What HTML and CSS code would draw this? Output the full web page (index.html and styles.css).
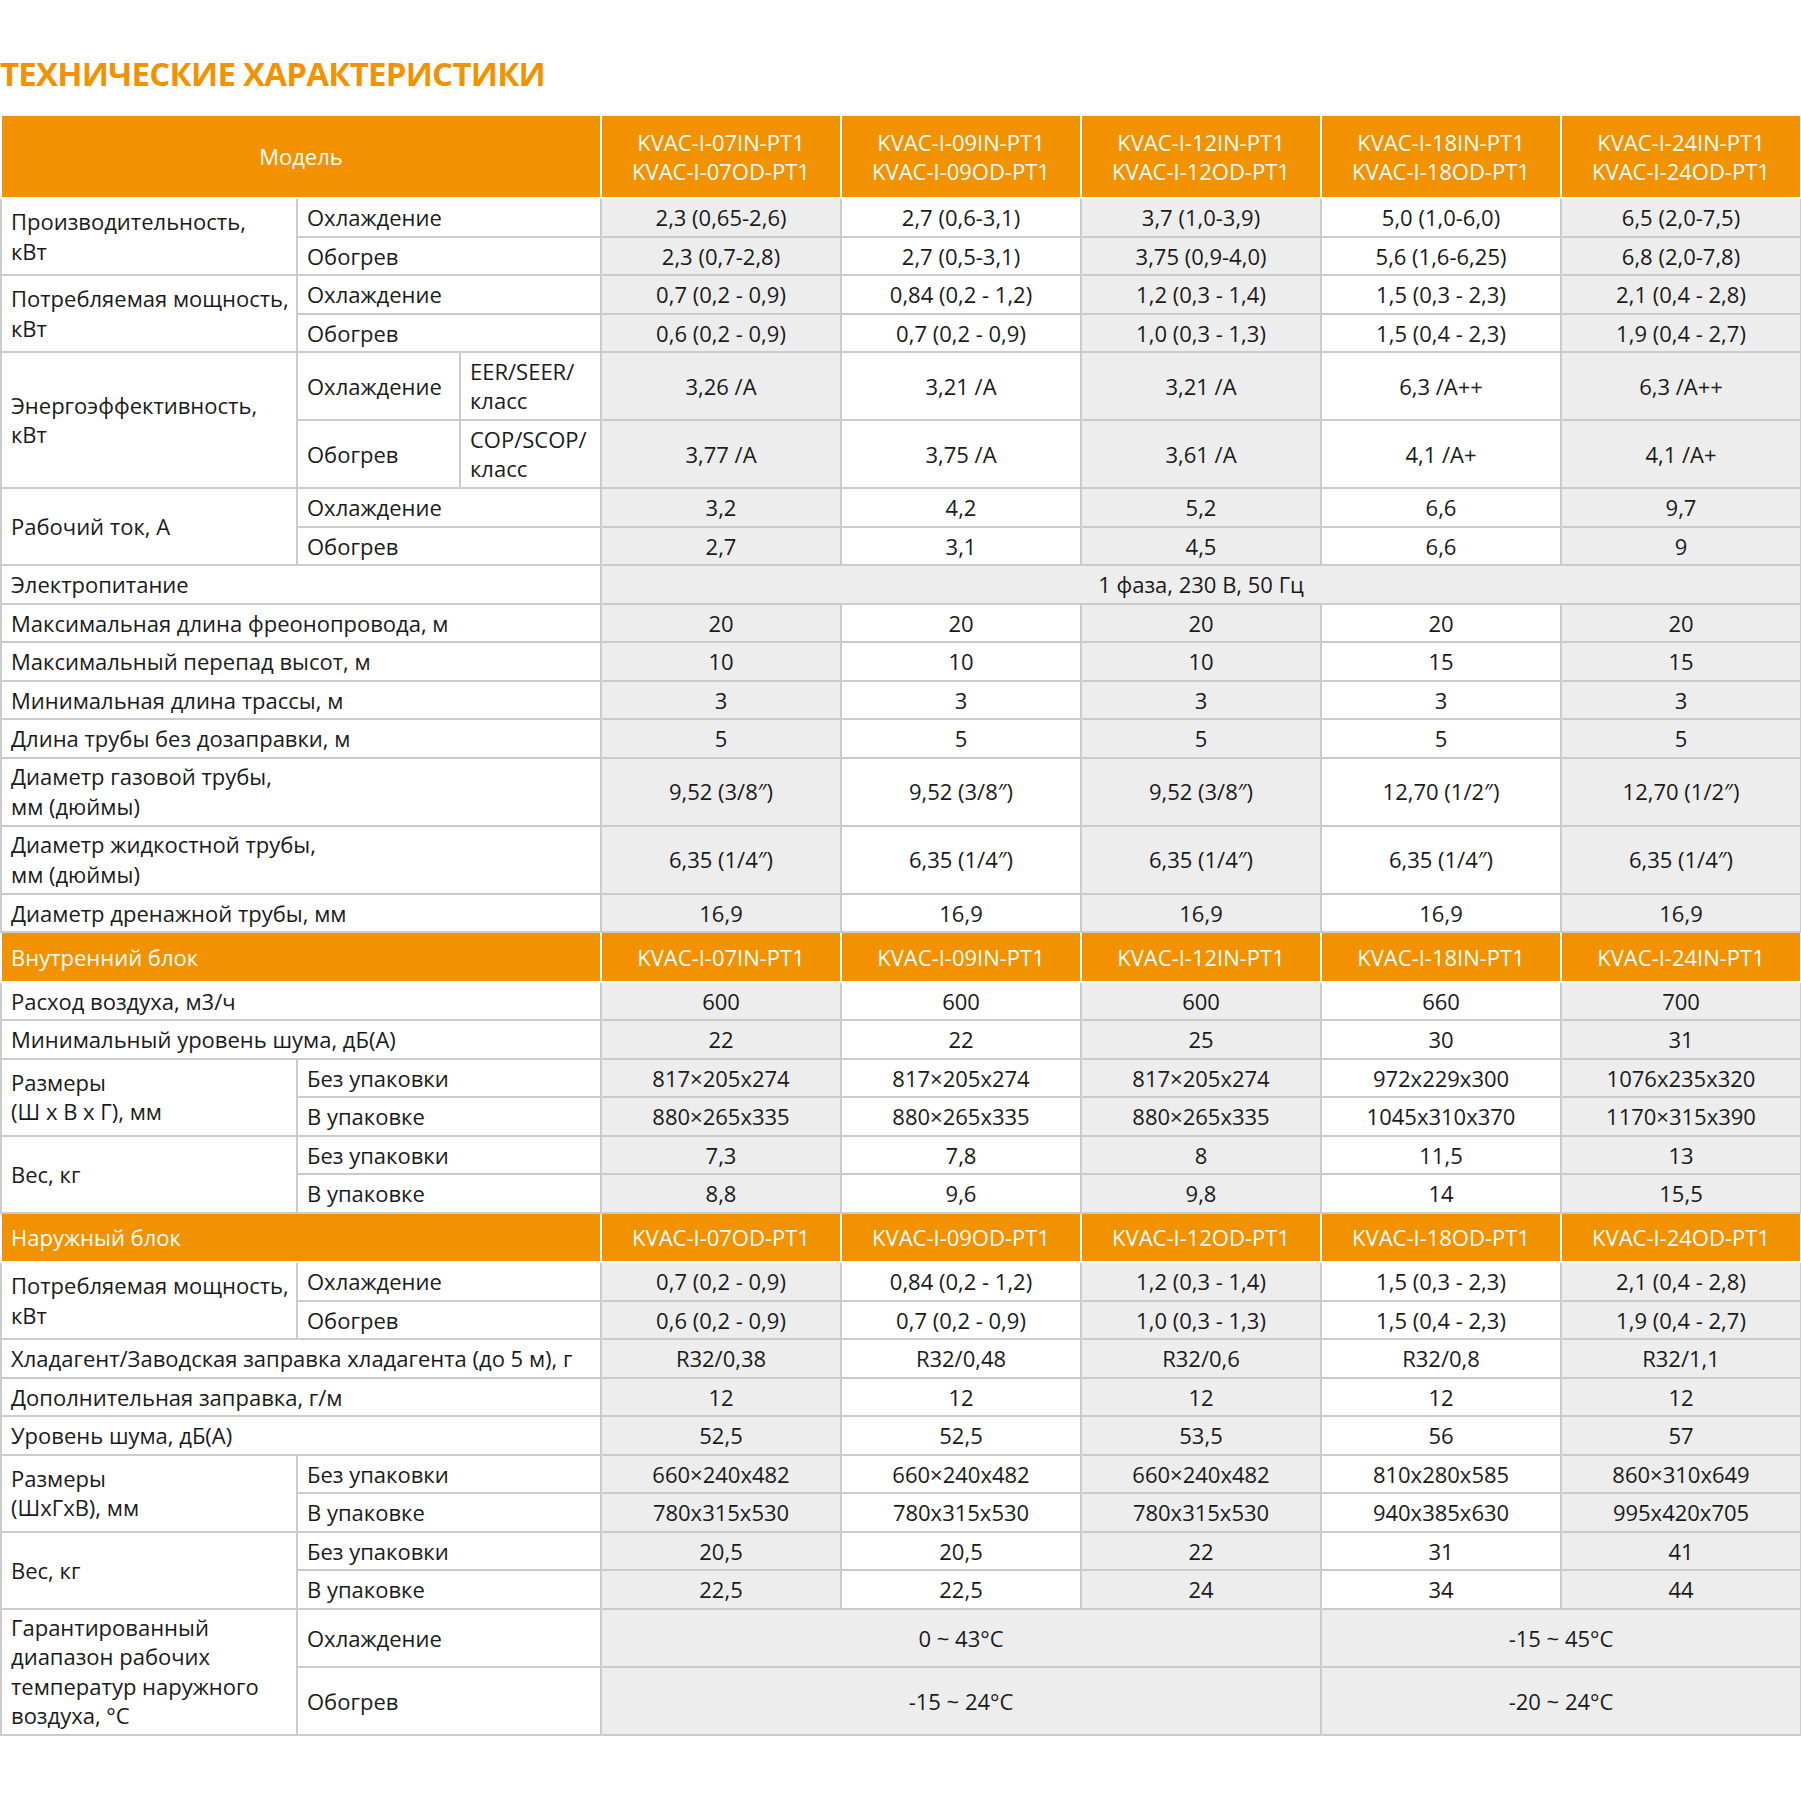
FILE: index.html
```html
<!DOCTYPE html>
<html lang="ru">
<head>
    <meta charset="UTF-8">
    <meta name="viewport" content="width=device-width, initial-scale=1.0">
    <title>Технические характеристики</title>
    <link rel="stylesheet" href="styles.css">
</head>
<body>
    <h1 class="title">ТЕХНИЧЕСКИЕ ХАРАКТЕРИСТИКИ</h1>

    <table class="specs">
        <colgroup>
            <col class="c-label">
            <col class="c-sub">
            <col class="c-kind">
            <col class="c-val"><col class="c-val"><col class="c-val"><col class="c-val"><col class="c-val">
        </colgroup>

        <tr class="head model">
            <td colspan="3" class="center">Модель</td>
            <td class="v">KVAC-I-07IN-PT1<br>KVAC-I-07OD-PT1</td>
            <td class="v">KVAC-I-09IN-PT1<br>KVAC-I-09OD-PT1</td>
            <td class="v">KVAC-I-12IN-PT1<br>KVAC-I-12OD-PT1</td>
            <td class="v">KVAC-I-18IN-PT1<br>KVAC-I-18OD-PT1</td>
            <td class="v">KVAC-I-24IN-PT1<br>KVAC-I-24OD-PT1</td>
        </tr>

        <tr>
            <td rowspan="2" class="ml">Производительность,<br>кВт</td>
            <td colspan="2">Охлаждение</td>
            <td class="v">2,3 (0,65-2,6)</td><td class="v">2,7 (0,6-3,1)</td><td class="v">3,7 (1,0-3,9)</td><td class="v">5,0 (1,0-6,0)</td><td class="v">6,5 (2,0-7,5)</td>
        </tr>
        <tr>
            <td colspan="2">Обогрев</td>
            <td class="v">2,3 (0,7-2,8)</td><td class="v">2,7 (0,5-3,1)</td><td class="v">3,75 (0,9-4,0)</td><td class="v">5,6 (1,6-6,25)</td><td class="v">6,8 (2,0-7,8)</td>
        </tr>

        <tr>
            <td rowspan="2" class="ml">Потребляемая мощность,<br>кВт</td>
            <td colspan="2">Охлаждение</td>
            <td class="v">0,7 (0,2 - 0,9)</td><td class="v">0,84 (0,2 - 1,2)</td><td class="v">1,2 (0,3 - 1,4)</td><td class="v">1,5 (0,3 - 2,3)</td><td class="v">2,1 (0,4 - 2,8)</td>
        </tr>
        <tr>
            <td colspan="2">Обогрев</td>
            <td class="v">0,6 (0,2 - 0,9)</td><td class="v">0,7 (0,2 - 0,9)</td><td class="v">1,0 (0,3 - 1,3)</td><td class="v">1,5 (0,4 - 2,3)</td><td class="v">1,9 (0,4 - 2,7)</td>
        </tr>

        <tr class="tall">
            <td rowspan="2" class="ml">Энергоэффективность,<br>кВт</td>
            <td>Охлаждение</td>
            <td class="ml">EER/SEER/<br>класс</td>
            <td class="v">3,26 /A</td><td class="v">3,21 /A</td><td class="v">3,21 /A</td><td class="v">6,3 /A++</td><td class="v">6,3 /A++</td>
        </tr>
        <tr class="tall">
            <td>Обогрев</td>
            <td class="ml">COP/SCOP/<br>класс</td>
            <td class="v">3,77 /A</td><td class="v">3,75 /A</td><td class="v">3,61 /A</td><td class="v">4,1 /A+</td><td class="v">4,1 /A+</td>
        </tr>

        <tr>
            <td rowspan="2">Рабочий ток, А</td>
            <td colspan="2">Охлаждение</td>
            <td class="v">3,2</td><td class="v">4,2</td><td class="v">5,2</td><td class="v">6,6</td><td class="v">9,7</td>
        </tr>
        <tr>
            <td colspan="2">Обогрев</td>
            <td class="v">2,7</td><td class="v">3,1</td><td class="v">4,5</td><td class="v">6,6</td><td class="v">9</td>
        </tr>

        <tr>
            <td colspan="3">Электропитание</td>
            <td colspan="5" class="v grey">1 фаза, 230 В, 50 Гц</td>
        </tr>
        <tr>
            <td colspan="3">Максимальная длина фреонопровода, м</td>
            <td class="v">20</td><td class="v">20</td><td class="v">20</td><td class="v">20</td><td class="v">20</td>
        </tr>
        <tr>
            <td colspan="3">Максимальный перепад высот, м</td>
            <td class="v">10</td><td class="v">10</td><td class="v">10</td><td class="v">15</td><td class="v">15</td>
        </tr>
        <tr>
            <td colspan="3">Минимальная длина трассы, м</td>
            <td class="v">3</td><td class="v">3</td><td class="v">3</td><td class="v">3</td><td class="v">3</td>
        </tr>
        <tr>
            <td colspan="3">Длина трубы без дозаправки, м</td>
            <td class="v">5</td><td class="v">5</td><td class="v">5</td><td class="v">5</td><td class="v">5</td>
        </tr>
        <tr class="two">
            <td colspan="3" class="ml">Диаметр газовой трубы,<br>мм (дюймы)</td>
            <td class="v">9,52 (3/8″)</td><td class="v">9,52 (3/8″)</td><td class="v">9,52 (3/8″)</td><td class="v">12,70 (1/2″)</td><td class="v white">12,70 (1/2″)</td>
        </tr>
        <tr class="two">
            <td colspan="3" class="ml">Диаметр жидкостной трубы,<br>мм (дюймы)</td>
            <td class="v">6,35 (1/4″)</td><td class="v">6,35 (1/4″)</td><td class="v">6,35 (1/4″)</td><td class="v">6,35 (1/4″)</td><td class="v white">6,35 (1/4″)</td>
        </tr>
        <tr>
            <td colspan="3">Диаметр дренажной трубы, мм</td>
            <td class="v">16,9</td><td class="v">16,9</td><td class="v">16,9</td><td class="v">16,9</td><td class="v">16,9</td>
        </tr>

        <tr class="head">
            <td colspan="3">Внутренний блок</td>
            <td class="v">KVAC-I-07IN-PT1</td><td class="v">KVAC-I-09IN-PT1</td><td class="v">KVAC-I-12IN-PT1</td><td class="v">KVAC-I-18IN-PT1</td><td class="v">KVAC-I-24IN-PT1</td>
        </tr>
        <tr>
            <td colspan="3">Расход воздуха, м3/ч</td>
            <td class="v">600</td><td class="v">600</td><td class="v">600</td><td class="v">660</td><td class="v">700</td>
        </tr>
        <tr>
            <td colspan="3">Минимальный уровень шума, дБ(А)</td>
            <td class="v">22</td><td class="v">22</td><td class="v">25</td><td class="v">30</td><td class="v">31</td>
        </tr>
        <tr>
            <td rowspan="2" class="ml">Размеры<br>(Ш x В x Г), мм</td>
            <td colspan="2">Без упаковки</td>
            <td class="v">817×205x274</td><td class="v">817×205x274</td><td class="v">817×205x274</td><td class="v">972x229x300</td><td class="v">1076x235x320</td>
        </tr>
        <tr>
            <td colspan="2">В упаковке</td>
            <td class="v">880×265x335</td><td class="v">880×265x335</td><td class="v">880×265x335</td><td class="v">1045x310x370</td><td class="v">1170×315x390</td>
        </tr>
        <tr>
            <td rowspan="2">Вес, кг</td>
            <td colspan="2">Без упаковки</td>
            <td class="v">7,3</td><td class="v">7,8</td><td class="v">8</td><td class="v">11,5</td><td class="v">13</td>
        </tr>
        <tr>
            <td colspan="2">В упаковке</td>
            <td class="v">8,8</td><td class="v">9,6</td><td class="v">9,8</td><td class="v">14</td><td class="v">15,5</td>
        </tr>

        <tr class="head">
            <td colspan="3">Наружный блок</td>
            <td class="v">KVAC-I-07OD-PT1</td><td class="v">KVAC-I-09OD-PT1</td><td class="v">KVAC-I-12OD-PT1</td><td class="v">KVAC-I-18OD-PT1</td><td class="v">KVAC-I-24OD-PT1</td>
        </tr>
        <tr>
            <td rowspan="2" class="ml">Потребляемая мощность,<br>кВт</td>
            <td colspan="2">Охлаждение</td>
            <td class="v">0,7 (0,2 - 0,9)</td><td class="v">0,84 (0,2 - 1,2)</td><td class="v">1,2 (0,3 - 1,4)</td><td class="v">1,5 (0,3 - 2,3)</td><td class="v">2,1 (0,4 - 2,8)</td>
        </tr>
        <tr>
            <td colspan="2">Обогрев</td>
            <td class="v">0,6 (0,2 - 0,9)</td><td class="v">0,7 (0,2 - 0,9)</td><td class="v">1,0 (0,3 - 1,3)</td><td class="v">1,5 (0,4 - 2,3)</td><td class="v">1,9 (0,4 - 2,7)</td>
        </tr>
        <tr>
            <td colspan="3">Хладагент/Заводская заправка хладагента (до 5 м), г</td>
            <td class="v">R32/0,38</td><td class="v">R32/0,48</td><td class="v">R32/0,6</td><td class="v">R32/0,8</td><td class="v">R32/1,1</td>
        </tr>
        <tr>
            <td colspan="3">Дополнительная заправка, г/м</td>
            <td class="v">12</td><td class="v">12</td><td class="v">12</td><td class="v">12</td><td class="v">12</td>
        </tr>
        <tr>
            <td colspan="3">Уровень шума, дБ(А)</td>
            <td class="v">52,5</td><td class="v">52,5</td><td class="v">53,5</td><td class="v">56</td><td class="v">57</td>
        </tr>
        <tr>
            <td rowspan="2" class="ml">Размеры<br>(ШхГхВ), мм</td>
            <td colspan="2">Без упаковки</td>
            <td class="v">660×240x482</td><td class="v">660×240x482</td><td class="v">660×240x482</td><td class="v">810x280x585</td><td class="v">860×310x649</td>
        </tr>
        <tr>
            <td colspan="2">В упаковке</td>
            <td class="v">780x315x530</td><td class="v">780x315x530</td><td class="v">780x315x530</td><td class="v">940x385x630</td><td class="v">995x420x705</td>
        </tr>
        <tr>
            <td rowspan="2">Вес, кг</td>
            <td colspan="2">Без упаковки</td>
            <td class="v">20,5</td><td class="v">20,5</td><td class="v">22</td><td class="v">31</td><td class="v">41</td>
        </tr>
        <tr>
            <td colspan="2">В упаковке</td>
            <td class="v">22,5</td><td class="v">22,5</td><td class="v">24</td><td class="v">34</td><td class="v">44</td>
        </tr>

        <tr class="range-cool">
            <td rowspan="2" class="ml range-label">Гарантированный<br>диапазон рабочих<br>температур наружного<br>воздуха, °C</td>
            <td colspan="2">Охлаждение</td>
            <td colspan="3" class="v grey">0 ~ 43°C</td>
            <td colspan="2" class="v grey">-15 ~ 45°C</td>
        </tr>
        <tr class="range-heat">
            <td colspan="2">Обогрев</td>
            <td colspan="3" class="v grey">-15 ~ 24°C</td>
            <td colspan="2" class="v grey">-20 ~ 24°C</td>
        </tr>
    </table>
</body>
</html>
```

FILE: styles.css
```css
body {
    margin: 0;
    font-family: "Open Sans", "Noto Sans", sans-serif;
    color: #1a1a1a;
    background: #fff;
}
.title {
    margin: 51px 0 18px;
    font-size: 33px;
    line-height: 45px;
    font-weight: 700;
    letter-spacing: -0.75px;
    color: #f39200;
}
.specs {
    border-collapse: collapse;
    table-layout: fixed;
    width: 1800px;
    font-size: 22px;
    line-height: 28.5px;
}
.c-label {
    width: 296px;
}
.c-sub {
    width: 163px;
}
.c-kind {
    width: 141px;
}
.c-val {
    width: 240px;
}
.specs td {
    border: 2px solid #cbcbcb;
    padding: 4px 9px;
    text-align: left;
    vertical-align: middle;
    white-space: nowrap;
    background: #fff;
}
.specs .ml {
    line-height: 29.5px;
}
.specs .v {
    text-align: center;
}
.specs .v:nth-last-child(odd),
.specs .grey {
    background: #ededed;
}
.specs .white {
    background: #fff;
}
.specs .head td,
.specs .head .v:nth-last-child(odd) {
    background: #f39200;
    color: #fff;
    border-color: #fff;
    padding-top: 9.5px;
    padding-bottom: 9.5px;
}
.specs .model td,
.specs .model .v:nth-last-child(odd) {
    padding-top: 12px;
    padding-bottom: 12px;
}
.specs .center {
    text-align: center;
}
.specs .tall td,
.specs .two td {
    padding-top: 3.5px;
    padding-bottom: 3.5px;
}
.specs .range-cool td {
    padding-top: 14px;
    padding-bottom: 14px;
}
.specs .range-heat td {
    padding-top: 18.5px;
    padding-bottom: 18.5px;
}
.specs .range-cool .range-label {
    padding-top: 3px;
    padding-bottom: 3px;
}
```
